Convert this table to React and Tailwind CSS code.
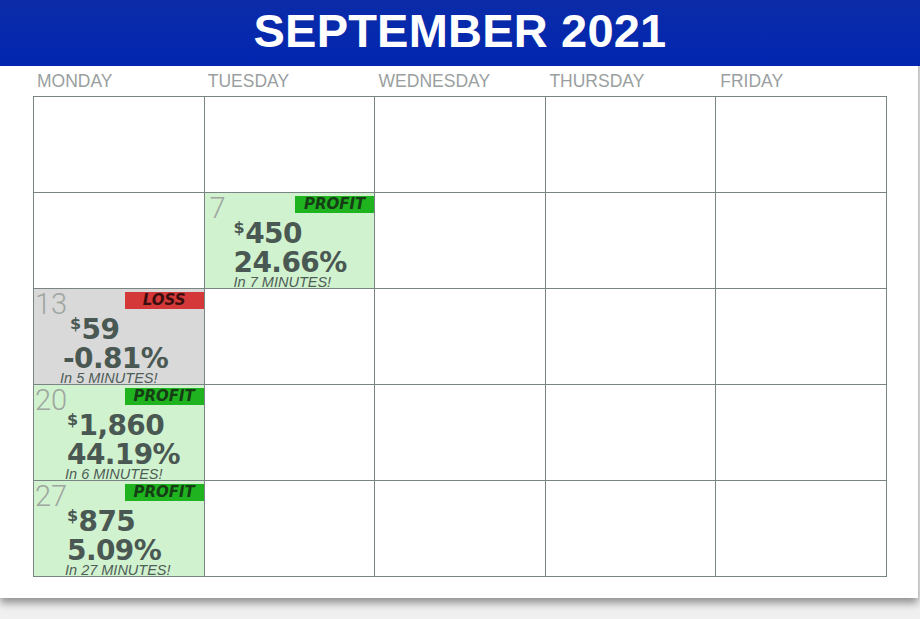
import React from 'react'

const DAYS = ['MONDAY', 'TUESDAY', 'WEDNESDAY', 'THURSDAY', 'FRIDAY']

// trades keyed by cell index (row * 5 + col)
const TRADES = {
  6: {
    day: '7', win: true, amount: '450', pct: '24.66%', mins: 7,
    amtPad: 'pl-[29px]', pctPad: 'pl-[29px]', inPad: 'pl-[29px]', numPad: 'pl-[5px]',
  },
  10: {
    day: '13', win: false, amount: '59', pct: '-0.81%', mins: 5,
    amtPad: 'pl-[36px]', pctPad: 'pl-[29px]', inPad: 'pl-[26px]', numPad: 'pl-[1px]',
  },
  15: {
    day: '20', win: true, amount: '1,860', pct: '44.19%', mins: 6,
    amtPad: 'pl-[33px]', pctPad: 'pl-[33px]', inPad: 'pl-[31px]', numPad: 'pl-[1px]',
  },
  20: {
    day: '27', win: true, amount: '875', pct: '5.09%', mins: 27,
    amtPad: 'pl-[33px]', pctPad: 'pl-[33px]', inPad: 'pl-[31px]', numPad: 'pl-[1px]',
  },
}

function TradeCell({ t }) {
  return (
    <div className={`h-[96px] border-r border-b border-[#7a8482] ${t.win ? 'bg-[#d1f2cf]' : 'bg-[#d9d9d9]'}`}>
      <div className="flex justify-between h-[25px]">
        <span className={`${t.numPad} mt-[1px] text-[29px] leading-none font-light text-[#9ea69f] font-['Roboto',sans-serif]`}>
          {t.day}
        </span>
        <span
          className={`mt-[3px] h-[17px] w-[79px] flex items-center justify-center text-[15px] leading-none font-bold italic font-['DejaVu_Sans',sans-serif] ${
            t.win ? 'bg-[#1fb31f] text-[#163d16]' : 'bg-[#d43838] text-[#3a0f0f]'
          }`}
        >
          {t.win ? 'PROFIT' : 'LOSS'}
        </span>
      </div>
      <div className="font-['DejaVu_Sans',sans-serif] font-bold text-[#4a5853] text-[28px] tracking-[-0.6px]">
        <div className={`${t.amtPad} leading-[32px]`}>
          <span className="inline-block align-top text-[16px] leading-none mt-[2px] mr-[1px]">$</span>
          {t.amount}
        </div>
        <div className={`${t.pctPad} leading-[26px]`}>{t.pct}</div>
      </div>
      <div className={`${t.inPad} text-[14.5px] leading-[12px] italic text-[#4f5d58] font-['Liberation_Sans',sans-serif]`}>
        In {t.mins} MINUTES!
      </div>
    </div>
  )
}

export default function App() {
  const cells = Array.from({ length: 25 }, (_, i) => i)

  return (
    <div className="w-[920px] h-[619px] bg-[#f0f0f0] overflow-hidden font-['Liberation_Sans',sans-serif]">
      <div className="w-[918px] h-[598px] bg-white shadow-[0_5px_8px_rgba(0,0,0,0.4)]">
        {/* Month header */}
        <div className="h-[66px] w-[920px] bg-gradient-to-b from-[#0b2ba8] to-[#0226b0] flex items-center justify-center pb-[5px]">
          <h1 className="text-white font-bold text-[47px] leading-none tracking-[0.2px]">SEPTEMBER 2021</h1>
        </div>

        <div className="pl-[33px]">
          {/* Weekday labels */}
          <div className="grid grid-cols-5 w-[854px] h-[30px] items-center">
            {DAYS.map((d) => (
              <div key={d} className="pl-[4px] text-[17.5px] leading-none text-[#9aa0a0] pt-[1px]">
                {d}
              </div>
            ))}
          </div>

          {/* Calendar grid */}
          <div className="grid grid-cols-5 w-[854px] border-l border-t border-[#7a8482]">
            {cells.map((i) =>
              TRADES[i] ? (
                <TradeCell key={i} t={TRADES[i]} />
              ) : (
                <div key={i} className="h-[96px] border-r border-b border-[#7a8482]" />
              )
            )}
          </div>
        </div>
      </div>
    </div>
  )
}
